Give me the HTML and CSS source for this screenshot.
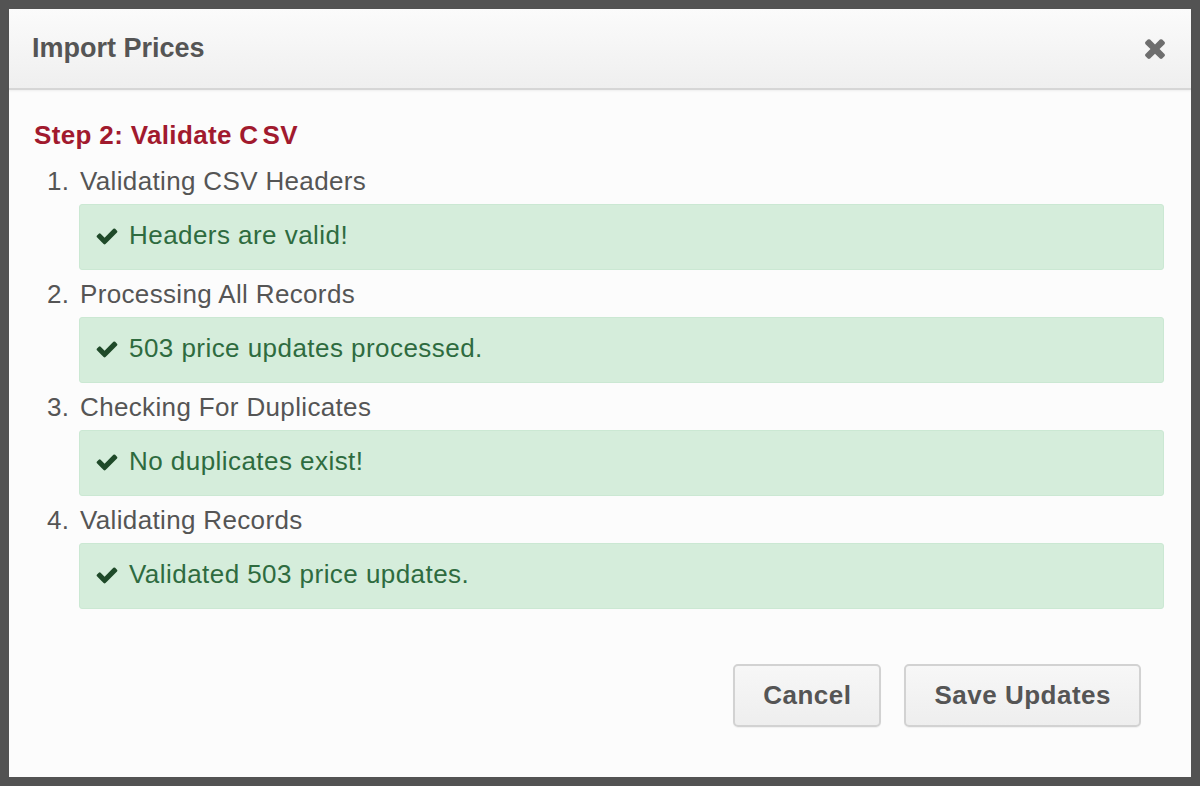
FILE: index.html
```html
<!DOCTYPE html>
<html>
<head>
<meta charset="utf-8">
<link rel="stylesheet" href="styles.css">
</head>
<body>
<div class="modal">
  <div class="modal-header">
    <h1 class="modal-title">Import Prices</h1>
    <button class="close" aria-label="Close">
      <svg viewBox="0 0 1408 1792" width="24" height="30"><path fill="currentColor" d="M1298 1322q0 40-28 68l-136 136q-28 28-68 28t-68-28l-294-294-294 294q-28 28-68 28t-68-28l-136-136q-28-28-28-68t28-68l294-294-294-294q-28-28-28-68t28-68l136-136q28-28 68-28t68 28l294 294 294-294q28-28 68-28t68 28l136 136q28 28 28 68t-28 68l-294 294 294 294q28 28 28 68z"/></svg>
    </button>
  </div>
  <div class="modal-body">
    <h2 class="step">Step 2: Validate <span class="gap">C</span>SV</h2>
    <ol class="steps">
      <li class="item">
        <span class="num">1.</span>
        <div class="content">
          <div class="label">Validating CSV Headers</div>
          <div class="alert"><svg class="check" viewBox="0 0 1792 1792"><path fill="currentColor" d="M1671 566q0 40-28 68l-724 724-136 136q-28 28-68 28t-68-28l-136-136-362-362q-28-28-28-68t28-68l136-136q28-28 68-28t68 28l294 295 656-657q28-28 68-28t68 28l136 136q28 28 28 68z"/></svg><span>Headers are valid!</span></div>
        </div>
      </li>
      <li class="item">
        <span class="num">2.</span>
        <div class="content">
          <div class="label">Processing All Records</div>
          <div class="alert"><svg class="check" viewBox="0 0 1792 1792"><path fill="currentColor" d="M1671 566q0 40-28 68l-724 724-136 136q-28 28-68 28t-68-28l-136-136-362-362q-28-28-28-68t28-68l136-136q28-28 68-28t68 28l294 295 656-657q28-28 68-28t68 28l136 136q28 28 28 68z"/></svg><span>503 price updates processed.</span></div>
        </div>
      </li>
      <li class="item">
        <span class="num">3.</span>
        <div class="content">
          <div class="label">Checking For Duplicates</div>
          <div class="alert"><svg class="check" viewBox="0 0 1792 1792"><path fill="currentColor" d="M1671 566q0 40-28 68l-724 724-136 136q-28 28-68 28t-68-28l-136-136-362-362q-28-28-28-68t28-68l136-136q28-28 68-28t68 28l294 295 656-657q28-28 68-28t68 28l136 136q28 28 28 68z"/></svg><span>No duplicates exist!</span></div>
        </div>
      </li>
      <li class="item">
        <span class="num">4.</span>
        <div class="content">
          <div class="label">Validating Records</div>
          <div class="alert"><svg class="check" viewBox="0 0 1792 1792"><path fill="currentColor" d="M1671 566q0 40-28 68l-724 724-136 136q-28 28-68 28t-68-28l-136-136-362-362q-28-28-28-68t28-68l136-136q28-28 68-28t68 28l294 295 656-657q28-28 68-28t68 28l136 136q28 28 28 68z"/></svg><span>Validated 503 price updates.</span></div>
        </div>
      </li>
    </ol>
  </div>
  <div class="modal-footer">
    <button class="btn">Cancel</button>
    <button class="btn">Save Updates</button>
  </div>
</div>
</body>
</html>
```
FILE: styles.css
```css
* { box-sizing: border-box; }
html, body { margin: 0; padding: 0; }
body {
  width: 1200px;
  height: 786px;
  background: #535353;
  padding: 9px;
  font-family: "Liberation Sans", Arial, sans-serif;
}
.modal {
  width: 1182px;
  height: 768px;
  background: #fcfcfc;
  display: flex;
  flex-direction: column;
}
.modal-header {
  height: 81px;
  display: flex;
  align-items: center;
  justify-content: space-between;
  padding: 0 24px 2px 23px;
  background: linear-gradient(#fbfbfb, #efefef);
  border-bottom: 2px solid #d6d6d6;
  box-shadow: 0 1px 2px rgba(0,0,0,0.06);
}
.modal-title {
  margin: 0;
  font-size: 27px;
  font-weight: bold;
  color: #555;
  line-height: 32px;
}
.close {
  border: 0;
  background: none;
  padding: 0;
  color: #6e6e6e;
  display: flex;
  align-items: center;
}
.modal-body {
  padding: 31px 27px 0 25px;
}
.step {
  margin: 0;
  font-size: 26px;
  line-height: 28px;
  font-weight: bold;
  color: #a11a2e;
  letter-spacing: 0.35px;
}
.gap {
  margin-right: 4px;
}
.steps {
  list-style: none;
  margin: 18px 0 0 0;
  padding: 0;
}
.item {
  display: flex;
  margin-bottom: 10px;
}
.num {
  width: 45px;
  padding-left: 13px;
  font-size: 26px;
  line-height: 28px;
  color: #555;
  letter-spacing: 0.3px;
}
.content {
  flex: 1;
  display: flex;
  flex-direction: column;
  gap: 9px;
}
.label {
  font-size: 26px;
  line-height: 28px;
  color: #555;
  letter-spacing: 0.35px;
  padding-left: 1px;
}
.alert {
  height: 66px;
  background: #d5eddb;
  border: 1px solid #cbe8d3;
  border-radius: 3px;
  padding: 16px 16px 0 15px;
  display: flex;
  align-items: flex-start;
  gap: 10px;
  color: #2e6b3f;
  font-size: 26px;
  line-height: 28px;
  letter-spacing: 0.45px;
}
.check {
  width: 24px;
  height: 24px;
  margin-top: 3px;
  color: #1f4a29;
}
.modal-footer {
  display: flex;
  justify-content: flex-end;
  gap: 23px;
  padding: 45px 50px 0 0;
}
.btn {
  height: 63px;
  padding: 0 28px;
  font-family: "Liberation Sans", Arial, sans-serif;
  font-size: 26px;
  font-weight: bold;
  letter-spacing: 0.5px;
  color: #555;
  background: linear-gradient(#f7f7f7, #eeeeee);
  border: 2px solid #d2d2d2;
  border-radius: 5px;
  box-shadow: 0 1px 1px rgba(0,0,0,0.05);
}
```
